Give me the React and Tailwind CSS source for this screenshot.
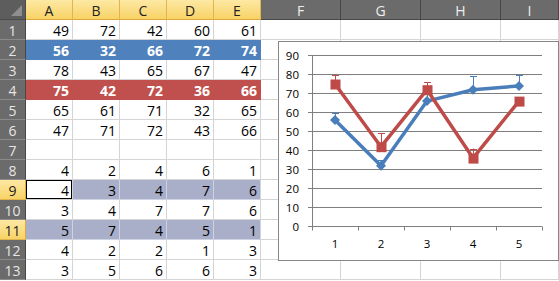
const cols = ["A", "B", "C", "D", "E", "F", "G", "H", "I"];

const rows = [
  { n: 1, v: [49, 72, 42, 60, 61] },
  { n: 2, v: [56, 32, 66, 72, 74], fill: "blue" },
  { n: 3, v: [78, 43, 65, 67, 47] },
  { n: 4, v: [75, 42, 72, 36, 66], fill: "red" },
  { n: 5, v: [65, 61, 71, 32, 65] },
  { n: 6, v: [47, 71, 72, 43, 66] },
  { n: 7, v: [] },
  { n: 8, v: [4, 2, 4, 6, 1] },
  { n: 9, v: [4, 3, 4, 7, 6], sel: true },
  { n: 10, v: [3, 4, 7, 7, 6] },
  { n: 11, v: [5, 7, 4, 5, 1], sel: true },
  { n: 12, v: [4, 2, 2, 1, 3] },
  { n: 13, v: [3, 5, 6, 6, 3] },
];

const blue = [56, 32, 66, 72, 74];
const red = [75, 42, 72, 36, 66];
const blueErr = [4, 3, 4, 7, 6];
const redErr = [5, 7, 4, 5, 1];
const xs = [56, 102, 148, 194, 240];
const y = (v) => 184.5 - v * 1.9;

function Chart() {
  const grid = [0, 10, 20, 30, 40, 50, 60, 70, 80, 90];
  const line = (vals) => vals.map((v, i) => `${xs[i]},${y(v)}`).join(" ");

  return (
    <div className="absolute left-[278px] top-[41px] w-[281px] h-[220px] border border-[#868686] bg-white">
      <svg width="279" height="218" className="block" style={{ fontFamily: '"Open Sans", sans-serif' }}>
        {grid.map((g) => (
          <g key={g}>
            <line x1="29" x2="263" y1={y(g)} y2={y(g)} stroke="#7f7f7f" strokeWidth="1" />
            <text x="20" y={y(g) + 4} fontSize="11.5" textAnchor="end" fill="#000">
              {g}
            </text>
          </g>
        ))}
        <line x1="33.5" x2="33.5" y1={y(90)} y2={y(0)} stroke="#7f7f7f" strokeWidth="1" />
        {[33, 79, 125, 171, 217, 263].map((t) => (
          <line key={t} x1={t + 0.5} x2={t + 0.5} y1={y(0)} y2={y(0) + 4} stroke="#7f7f7f" strokeWidth="1" />
        ))}
        {xs.map((x, i) => (
          <text key={i} x={x} y="206" fontSize="11.5" textAnchor="middle" fill="#000">
            {i + 1}
          </text>
        ))}

        {/* blue series */}
        <polyline points={line(blue)} fill="none" stroke="#4a7ebb" strokeWidth="3.5" strokeLinejoin="round" />
        {blue.map((v, i) => (
          <g key={i}>
            <line x1={xs[i] + 0.5} x2={xs[i] + 0.5} y1={y(v)} y2={y(v + blueErr[i])} stroke="#4a7ebb" strokeWidth="1" />
            <line x1={xs[i] - 3} x2={xs[i] + 4} y1={Math.round(y(v + blueErr[i])) + 0.5} y2={Math.round(y(v + blueErr[i])) + 0.5} stroke="#4a7ebb" strokeWidth="1" />
            <polygon
              points={`${xs[i]},${y(v) - 5} ${xs[i] + 5},${y(v)} ${xs[i]},${y(v) + 5} ${xs[i] - 5},${y(v)}`}
              fill="#4a7ebb"
            />
          </g>
        ))}

        {/* red series */}
        <polyline points={line(red)} fill="none" stroke="#be4b48" strokeWidth="3.5" strokeLinejoin="round" />
        {red.map((v, i) => (
          <g key={i}>
            <line x1={xs[i] + 0.5} x2={xs[i] + 0.5} y1={y(v)} y2={y(v + redErr[i])} stroke="#be4b48" strokeWidth="1" />
            <line x1={xs[i] - 3} x2={xs[i] + 4} y1={Math.round(y(v + redErr[i])) + 0.5} y2={Math.round(y(v + redErr[i])) + 0.5} stroke="#be4b48" strokeWidth="1" />
            <rect x={xs[i] - 4.5} y={y(v) - 4.5} width="10" height="10" fill="#be4b48" />
          </g>
        ))}
      </svg>
    </div>
  );
}

function Cell({ row, ci }) {
  const val = row.v[ci];
  const inData = ci < 5;
  let cls = "h-5 border-r border-b border-[#d4d4d4] bg-white text-black";
  if (inData && row.fill === "blue") cls = "h-5 border-r border-b border-[#4f81bd] bg-[#4f81bd] text-white font-bold";
  if (inData && row.fill === "red") cls = "h-5 border-r border-b border-[#c0504d] bg-[#c0504d] text-white font-bold";
  if (inData && row.sel) cls = "h-5 border-r border-b border-[#cfd2e2] bg-[#a9aec9] text-black";
  if (inData && row.n === 9 && ci === 0) cls = "h-5 border-r border-b border-[#d4d4d4] bg-white text-black shadow-[inset_0_0_0_1px_#000]";
  return (
    <div className={cls}>
      {val !== undefined && (
        <div className="pt-[2px] pr-[3px] leading-[17px] text-right">{val}</div>
      )}
    </div>
  );
}

export default function App() {
  return (
    <div
      className="relative w-[559px] h-[281px] overflow-hidden bg-white text-[14px]"
      style={{ fontFamily: '"Open Sans", sans-serif' }}
    >
      <div className="grid grid-cols-[26px_47px_47px_47px_47px_47px_80px_80px_80px_1fr]">
        {/* header row */}
        <div className="h-5 relative bg-[#5d5d5d] border-r border-b border-[#4a4a4a]">
          <div className="absolute right-[3px] bottom-[3px] w-0 h-0 border-l-[11px] border-l-transparent border-b-[11px] border-b-[#8e8e8e]" />
        </div>
        {cols.map((c, i) =>
          i < 5 ? (
            <div
              key={c}
              className="h-5 border-r border-b border-r-[#e2b451] border-b-[#e0a93a] bg-gradient-to-b from-[#fde9a3] to-[#f8d264] text-[#222] text-center leading-[17px] pt-[2px]"
            >
              {c}
            </div>
          ) : (
            <div
              key={c}
              className="h-5 border-r border-b border-[#474747] bg-[#6b6b6b] text-[#eeeeee] text-center leading-[17px] pt-[2px]"
            >
              {c}
            </div>
          )
        )}

        {rows.map((row) => (
          <div key={row.n} className="contents">
            {row.sel ? (
              <div className="h-5 border-r border-b border-r-[#e0a93a] border-b-[#e2b451] bg-gradient-to-b from-[#fde9a3] to-[#f8d264] text-[#222] text-center leading-[17px] pt-[2px]">
                {row.n}
              </div>
            ) : (
              <div className="h-5 border-r border-b border-r-[#474747] border-b-[#8a8a8a] bg-[#6b6b6b] text-[#e6e6e6] text-center leading-[17px] pt-[2px]">
                {row.n}
              </div>
            )}
            {cols.map((c, ci) => (
              <Cell key={c} row={row} ci={ci} />
            ))}
          </div>
        ))}
      </div>

      <Chart />
    </div>
  );
}
